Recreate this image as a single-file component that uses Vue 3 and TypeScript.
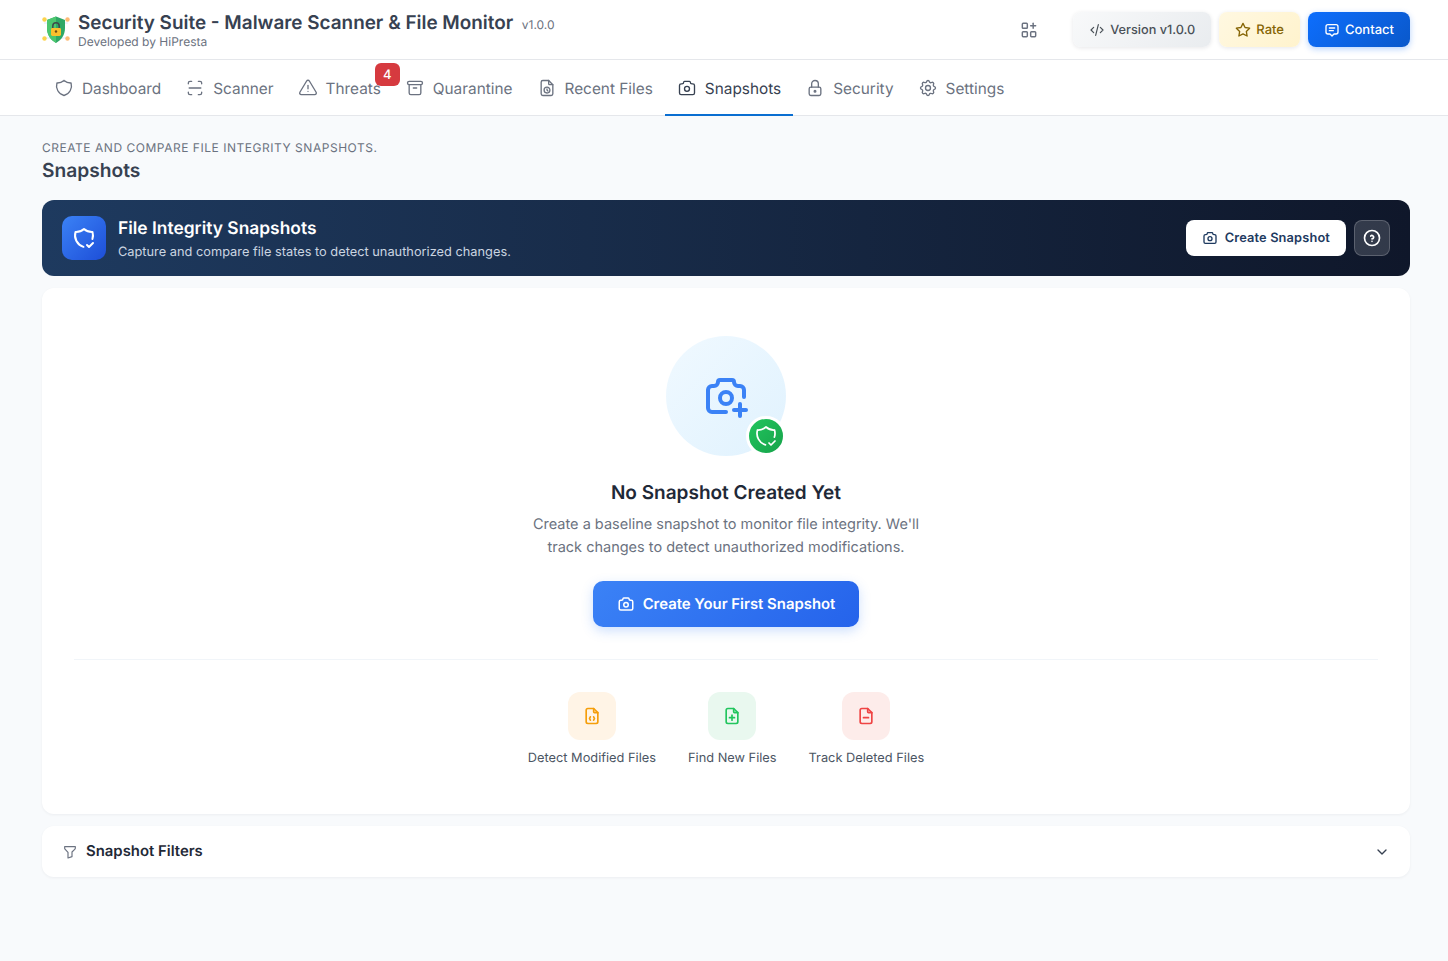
<script setup lang="ts">
import { h } from 'vue';

const fileBase = ['M14 3v4a1 1 0 0 0 1 1h4', 'M17 21h-10a2 2 0 0 1 -2 -2v-14a2 2 0 0 1 2 -2h7l5 5v11a2 2 0 0 1 -2 2z'];
const cameraPath = [
  'M5 7h1a2 2 0 0 0 2 -2a1 1 0 0 1 1 -1h6a1 1 0 0 1 1 1a2 2 0 0 0 2 2h1a2 2 0 0 1 2 2v9a2 2 0 0 1 -2 2h-14a2 2 0 0 1 -2 -2v-9a2 2 0 0 1 2 -2',
  'M9 13a3 3 0 1 0 6 0a3 3 0 0 0 -6 0',
];

const icons: Record<string, string[]> = {
  shield: ['M12 3a12 12 0 0 0 8.5 3a12 12 0 0 1 -8.5 15a12 12 0 0 1 -8.5 -15a12 12 0 0 0 8.5 -3'],
  scan: ['M4 7v-1a2 2 0 0 1 2 -2h2', 'M4 17v1a2 2 0 0 0 2 2h2', 'M16 4h2a2 2 0 0 1 2 2v1', 'M16 20h2a2 2 0 0 0 2 -2v-1', 'M5 12l14 0'],
  alert: ['M12 9v4', 'M10.363 3.591l-8.106 13.534a1.914 1.914 0 0 0 1.636 2.871h16.214a1.914 1.914 0 0 0 1.636 -2.87l-8.106 -13.536a1.914 1.914 0 0 0 -3.274 0z', 'M12 16h.01'],
  archive: ['M3 6a2 2 0 0 1 2 -2h14a2 2 0 0 1 2 2v0a2 2 0 0 1 -2 2h-14a2 2 0 0 1 -2 -2z', 'M5 8v10a2 2 0 0 0 2 2h10a2 2 0 0 0 2 -2v-10', 'M10 12l4 0'],
  fileClock: [...fileBase, 'M8.500 14.500a3.500 3.500 0 1 0 7 0a3.500 3.500 0 0 0 -7 0', 'M12 13v1.500l1 1'],
  camera: cameraPath,
  lock: ['M5 13a2 2 0 0 1 2 -2h10a2 2 0 0 1 2 2v6a2 2 0 0 1 -2 2h-10a2 2 0 0 1 -2 -2v-6z', 'M11 16a1 1 0 1 0 2 0a1 1 0 0 0 -2 0', 'M8 11v-4a4 4 0 1 1 8 0v4'],
  settings: [
    'M10.325 4.317c.426 -1.756 2.924 -1.756 3.35 0a1.724 1.724 0 0 0 2.573 1.066c1.543 -.94 3.31 .826 2.37 2.37a1.724 1.724 0 0 0 1.065 2.572c1.756 .426 1.756 2.924 0 3.35a1.724 1.724 0 0 0 -1.066 2.573c.94 1.543 -.826 3.31 -2.37 2.37a1.724 1.724 0 0 0 -2.572 1.065c-.426 1.756 -2.924 1.756 -3.35 0a1.724 1.724 0 0 0 -2.573 -1.066c-1.543 .94 -3.31 -.826 -2.37 -2.37a1.724 1.724 0 0 0 -1.065 -2.572c-1.756 -.426 -1.756 -2.924 0 -3.35a1.724 1.724 0 0 0 1.066 -2.573c-.94 -1.543 .826 -3.31 2.37 -2.37c1 .608 2.296 .07 2.572 -1.065z',
    'M9 12a3 3 0 1 0 6 0a3 3 0 0 0 -6 0',
  ],
  shieldCheck: ['M11.46 20.846a12 12 0 0 1 -7.96 -14.846a12 12 0 0 0 8.5 -3a12 12 0 0 0 8.5 3a12 12 0 0 1 -.09 7.06', 'M15 19l2 2l4 -4'],
  apps: ['M4 5a1 1 0 0 1 1 -1h4a1 1 0 0 1 1 1v4a1 1 0 0 1 -1 1h-4a1 1 0 0 1 -1 -1z', 'M4 15a1 1 0 0 1 1 -1h4a1 1 0 0 1 1 1v4a1 1 0 0 1 -1 1h-4a1 1 0 0 1 -1 -1z', 'M14 15a1 1 0 0 1 1 -1h4a1 1 0 0 1 1 1v4a1 1 0 0 1 -1 1h-4a1 1 0 0 1 -1 -1z', 'M14 7h6', 'M17 4v6'],
  code: ['M7 8l-4 4l4 4', 'M17 8l4 4l-4 4', 'M14 4l-4 16'],
  star: ['M12 17.75l-6.172 3.245l1.179 -6.873l-5 -4.867l6.9 -1l3.086 -6.253l3.086 6.253l6.9 1l-5 4.867l1.179 6.873z'],
  message: ['M8 9h8', 'M8 13h6', 'M9 18h-3a3 3 0 0 1 -3 -3v-8a3 3 0 0 1 3 -3h12a3 3 0 0 1 3 3v8a3 3 0 0 1 -3 3h-3l-3 3l-3 -3z'],
  help: ['M3 12a9 9 0 1 0 18 0a9 9 0 0 0 -18 0', 'M12 16v.01', 'M12 13a2 2 0 0 0 .914 -3.782a1.98 1.98 0 0 0 -2.414 .483'],
  cameraPlus: ['M12 20h-7a2 2 0 0 1 -2 -2v-9a2 2 0 0 1 2 -2h1a2 2 0 0 0 2 -2a1 1 0 0 1 1 -1h6a1 1 0 0 1 1 1a2 2 0 0 0 2 2h1a2 2 0 0 1 2 2v3.500', 'M16 19h6', 'M19 16v6', 'M9 13a3 3 0 1 0 6 0a3 3 0 0 0 -6 0'],
  fileCode: [...fileBase, 'M10 13l-1 2l1 2', 'M14 13l1 2l-1 2'],
  filePlus: [...fileBase, 'M12 11v6', 'M9 14h6'],
  fileMinus: [...fileBase, 'M9 14h6'],
  filter: ['M4 4h16v2.172a2 2 0 0 1 -.586 1.414l-4.414 4.414v7l-6 2v-8.500l-4.480 -4.928a2 2 0 0 1 -.52 -1.345v-2.227z'],
  chevron: ['M6 9l6 6l6 -6'],
};

// small tabler-style stroke icon
function Icon(props: { name: string; size?: number; stroke?: number }) {
  const size = props.size ?? 18;
  return h(
    'svg',
    {
      width: size,
      height: size,
      viewBox: '0 0 24 24',
      fill: 'none',
      stroke: 'currentColor',
      'stroke-width': props.stroke ?? 2,
      'stroke-linecap': 'round',
      'stroke-linejoin': 'round',
      style: { display: 'block', flex: 'none' },
    },
    icons[props.name].map((d) => h('path', { d })),
  );
}
Icon.props = ['name', 'size', 'stroke'];

const tabs = [
  { label: 'Dashboard', icon: 'shield' },
  { label: 'Scanner', icon: 'scan' },
  { label: 'Threats', icon: 'alert', badge: 4 },
  { label: 'Quarantine', icon: 'archive' },
  { label: 'Recent Files', icon: 'fileClock' },
  { label: 'Snapshots', icon: 'camera', active: true },
  { label: 'Security', icon: 'lock' },
  { label: 'Settings', icon: 'settings' },
];

const features = [
  { label: 'Detect Modified Files', icon: 'fileCode', tone: 'orange' },
  { label: 'Find New Files', icon: 'filePlus', tone: 'green' },
  { label: 'Track Deleted Files', icon: 'fileMinus', tone: 'red' },
];
</script>

<template>
  <div class="page">
    <header class="topbar">
      <div class="brand">
        <svg class="logo" width="28" height="30" viewBox="0 0 28 30">
          <path d="M2 8h24M2 23h24" stroke="#dbeafe" stroke-width="1" fill="none" />
          <circle cx="2.500" cy="4.500" r="2.200" fill="#fcd34d" />
          <circle cx="25.500" cy="4.500" r="2.200" fill="#fdba74" />
          <circle cx="2.500" cy="23.500" r="2.200" fill="#fcd34d" />
          <circle cx="25.500" cy="23.500" r="2.200" fill="#fdba74" />
          <path d="M14 1.500l9 3.500v8c0 7.500-4 12-9 15C9 25 5 20.500 5 13V5z" fill="#2fa866" />
          <path d="M14 1.500V28C9 25 5 20.500 5 13V5z" fill="#4cc76f" />
          <path d="M10.800 13v-2a3.200 3.200 0 0 1 6.400 0v2" fill="none" stroke="#3f4a4a" stroke-width="1.500" />
          <rect x="9" y="13" width="10" height="8" rx="1.400" fill="#fbc02d" />
          <circle cx="14" cy="16.500" r="1.200" fill="#6b4a12" />
        </svg>
        <div class="brand-text">
          <div class="brand-title">
            <h1>Security Suite - Malware Scanner &amp; File Monitor</h1>
            <span>v1.0.0</span>
          </div>
          <div class="brand-sub">Developed by HiPresta</div>
        </div>
      </div>
      <div class="top-actions">
        <button class="apps-btn" type="button"><Icon name="apps" :size="20" :stroke="1.75" /></button>
        <button class="top-btn version" type="button"><Icon name="code" :size="16" :stroke="1.75" /><span>Version v1.0.0</span></button>
        <button class="top-btn rate" type="button"><Icon name="star" :size="16" /><span>Rate</span></button>
        <button class="top-btn contact" type="button"><Icon name="message" :size="16" /><span>Contact</span></button>
      </div>
    </header>

    <nav class="tabs">
      <a v-for="tab in tabs" :key="tab.label" class="tab" :class="{ active: tab.active }">
        <Icon :name="tab.icon" :size="20" :stroke="1.6" />
        <span>{{ tab.label }}</span>
        <b v-if="tab.badge" class="badge">{{ tab.badge }}</b>
      </a>
    </nav>

    <main class="content">
      <div class="page-head">
        <p>Create and compare file integrity snapshots.</p>
        <h2>Snapshots</h2>
      </div>

      <section class="banner">
        <div class="banner-left">
          <div class="banner-icon"><Icon name="shieldCheck" :size="24" /></div>
          <div class="banner-text">
            <h3>File Integrity Snapshots</h3>
            <p>Capture and compare file states to detect unauthorized changes.</p>
          </div>
        </div>
        <div class="banner-actions">
          <button class="create-btn" type="button"><Icon name="camera" :size="16" /><span>Create Snapshot</span></button>
          <button class="help-btn" type="button"><Icon name="help" :size="20" /></button>
        </div>
      </section>

      <section class="card empty">
        <div class="empty-visual">
          <Icon name="cameraPlus" :size="48" />
          <div class="empty-badge"><Icon name="shieldCheck" :size="24" :stroke="1.75" /></div>
        </div>
        <h3>No Snapshot Created Yet</h3>
        <p>Create a baseline snapshot to monitor file integrity. We'll<br />track changes to detect unauthorized modifications.</p>
        <button class="first-btn" type="button"><Icon name="camera" :size="18" /><span>Create Your First Snapshot</span></button>
        <div class="divider"></div>
        <div class="features">
          <div v-for="f in features" :key="f.label" class="feature">
            <div class="feature-icon" :class="f.tone"><Icon :name="f.icon" :size="20" /></div>
            <span>{{ f.label }}</span>
          </div>
        </div>
      </section>

      <section class="card filters">
        <div class="filters-left">
          <Icon name="filter" :size="16" :stroke="1.75" />
          <span>Snapshot Filters</span>
        </div>
        <Icon class="filters-chevron" name="chevron" :size="16" />
      </section>
    </main>
  </div>
</template>

<style>
html,
body {
  margin: 0;
  background: #f8fafc;
}
</style>

<style scoped>
.page {
  min-height: 961px;
  background: #f8fafc;
  font-family: Inter, 'Liberation Sans', sans-serif;
  color: #374151;
  text-rendering: geometricPrecision;
}

button {
  font-family: inherit;
  text-rendering: inherit;
  border: none;
  cursor: pointer;
}

.topbar {
  display: flex;
  align-items: center;
  justify-content: space-between;
  height: 59px;
  padding: 0 38px 0 42px;
  background: #fff;
  border-bottom: 1px solid #e5e7eb;
}

.brand {
  display: flex;
  align-items: center;
  gap: 8px;
}

.logo {
  display: block;
  flex: none;
}

.brand-title {
  display: flex;
  align-items: baseline;
  gap: 8.5px;
  padding-top: 1px;
}

.brand-title h1 {
  margin: 0;
  font-size: 18.9px;
  line-height: 24px;
  font-weight: 600;
  color: #374151;
}

.brand-title span {
  font-size: 12px;
  color: #6b7280;
}

.brand-sub {
  margin-top: -1px;
  font-size: 12px;
  line-height: 15px;
  color: #6b7280;
}

.top-actions {
  display: flex;
  align-items: center;
  gap: 8px;
}

.apps-btn {
  display: flex;
  padding: 0;
  margin-right: 26px;
  background: none;
  color: #6b7280;
}

.top-btn {
  display: flex;
  align-items: center;
  gap: 5px;
  height: 35px;
  padding: 0 16px;
  border-radius: 8px;
  font-size: 13px;
  font-weight: 500;
  box-shadow: 0 1px 4px rgba(15, 23, 42, 0.1);
}

.top-btn span {
  margin-top: 1px;
}

.version {
  font-size: 12.7px;
  background: linear-gradient(135deg, #f8f9fa, #e9ecef);
  color: #495057;
}

.rate {
  background: linear-gradient(135deg, #fff8e1, #fff3cd);
  color: #856404;
}

.contact {
  background: linear-gradient(135deg, #0d6efd, #0a58ca);
  color: #fff;
  box-shadow: 0 2px 6px rgba(13, 110, 253, 0.3);
}

.tabs {
  display: flex;
  height: 55px;
  padding: 0 42px;
  background: #fff;
  border-bottom: 1px solid #e5e7eb;
}

.tab {
  position: relative;
  display: flex;
  align-items: center;
  gap: 8px;
  padding: 2px 12px 0;
  margin-bottom: -1px;
  border-bottom: 2px solid transparent;
  font-size: 15.36px;
  color: #6b7280;
  box-sizing: border-box;
}

.tab.active {
  color: #374151;
  border-bottom-color: #0a6ed1;
}

.badge {
  position: absolute;
  top: 3px;
  right: -7px;
  min-width: 25px;
  height: 23px;
  border-radius: 6px;
  background: #d63a3f;
  color: #fff;
  font-size: 13px;
  font-weight: 500;
  line-height: 24px;
  text-align: center;
}

.content {
  padding: 24px 38px 0 42px;
}

.page-head p {
  margin: 0;
  font-size: 12px;
  line-height: 15px;
  letter-spacing: 0.53px;
  text-transform: uppercase;
  color: #6b7280;
}

.page-head h2 {
  margin: 3px 0 18px;
  font-size: 19.2px;
  line-height: 24px;
  font-weight: 600;
  color: #374151;
}

.banner {
  display: flex;
  align-items: center;
  justify-content: space-between;
  height: 76px;
  padding: 0 20px;
  box-sizing: border-box;
  border-radius: 12px;
  background: linear-gradient(90deg, #1e3a5f, #0f172a);
}

.banner-left {
  display: flex;
  align-items: center;
  gap: 12px;
}

.banner-icon {
  display: flex;
  align-items: center;
  justify-content: center;
  width: 44px;
  height: 44px;
  border-radius: 10px;
  background: linear-gradient(135deg, #3b82f6, #1d4ed8);
  color: #fff;
}

.banner-text {
  padding-top: 2px;
}

.banner h3 {
  margin: 0 0 3px;
  font-size: 17.4px;
  line-height: 24px;
  font-weight: 600;
  color: #fff;
}

.banner p {
  margin: 0;
  font-size: 12.8px;
  line-height: 18px;
  color: #cbd5e1;
}

.banner-actions {
  display: flex;
  gap: 8px;
}

.create-btn {
  display: flex;
  align-items: center;
  gap: 7px;
  height: 36px;
  padding: 0 16px;
  border-radius: 8px;
  background: #fff;
  color: #1e3a5f;
  font-size: 12.8px;
  font-weight: 600;
  letter-spacing: 0.15px;
}

.create-btn span {
  margin-top: 1px;
}

.help-btn {
  display: flex;
  align-items: center;
  justify-content: center;
  width: 36px;
  height: 36px;
  padding: 0;
  border-radius: 8px;
  border: 1px solid rgba(255, 255, 255, 0.2);
  background: rgba(255, 255, 255, 0.15);
  color: #fff;
}

.card {
  background: #fff;
  border-radius: 12px;
  box-shadow: 0 1px 3px rgba(15, 23, 42, 0.05);
}

.empty {
  display: flex;
  flex-direction: column;
  align-items: center;
  margin-top: 12px;
  padding: 48px 32px 47px;
}

.empty-visual {
  position: relative;
  display: flex;
  align-items: center;
  justify-content: center;
  width: 120px;
  height: 120px;
  border-radius: 50%;
  background: linear-gradient(135deg, #f0f9ff, #e0f2fe);
  color: #3b82f6;
}

.empty-badge {
  position: absolute;
  right: 0;
  bottom: 0;
  display: flex;
  align-items: center;
  justify-content: center;
  width: 34px;
  height: 34px;
  box-sizing: content-box;
  border: 3px solid #fff;
  border-radius: 50%;
  background: linear-gradient(135deg, #22c55e, #16a34a);
  color: #fff;
}

.empty h3 {
  margin: 25px 0 8px;
  font-size: 19px;
  line-height: 24px;
  font-weight: 600;
  color: #1f2937;
}

.empty p {
  margin: 0 0 22px;
  font-size: 14.5px;
  line-height: 23px;
  text-align: center;
  color: #6b7280;
}

.first-btn {
  display: flex;
  align-items: center;
  gap: 8px;
  height: 46px;
  padding: 0 24px;
  border-radius: 10px;
  background: linear-gradient(135deg, #3b82f6, #2563eb);
  color: #fff;
  font-size: 14.9px;
  font-weight: 600;
  box-shadow: 0 4px 12px rgba(59, 130, 246, 0.25);
}

.first-btn span {
  margin-top: -1px;
}

.divider {
  align-self: stretch;
  height: 1px;
  margin: 32px 0;
  background: #f1f5f9;
}

.features {
  display: flex;
  gap: 32px;
}

.feature {
  display: flex;
  flex-direction: column;
  align-items: center;
  gap: 10px;
  font-size: 12.8px;
  line-height: 17px;
  color: #4b5563;
}

.feature-icon {
  display: flex;
  align-items: center;
  justify-content: center;
  width: 48px;
  height: 48px;
  border-radius: 12px;
}

.feature-icon.orange {
  background: #fff4e6;
  color: #f59e0b;
}

.feature-icon.green {
  background: #e9f8ef;
  color: #22c55e;
}

.feature-icon.red {
  background: #fdecea;
  color: #ef4444;
}

.filters {
  display: flex;
  align-items: center;
  justify-content: space-between;
  height: 51px;
  margin-top: 12px;
  padding: 0 20px;
}

.filters-left {
  display: flex;
  align-items: center;
  gap: 8px;
  font-size: 14.9px;
  font-weight: 600;
  color: #1f2937;
}

.filters-left span {
  margin-top: -1px;
}

.filters-left svg {
  color: #6b7280;
}

.filters-chevron {
  color: #374151;
}
</style>
